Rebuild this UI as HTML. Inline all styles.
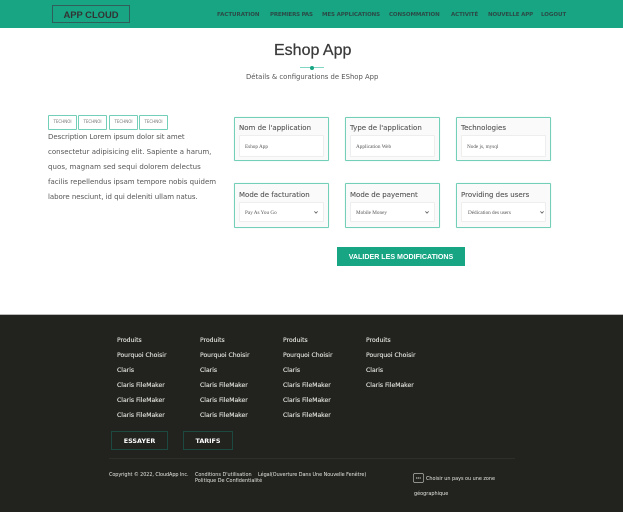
<!DOCTYPE html>
<html lang="fr">
<head>
<meta charset="utf-8">
<title>Eshop App</title>
<style>
html,body{margin:0;padding:0;background:#fff}
#p{position:relative;width:623px;height:512px;overflow:hidden;background:#fff;font-family:"DejaVu Sans","Liberation Sans",sans-serif;filter:blur(.35px)}
#p div,#p span.t{position:absolute;box-sizing:border-box}
.t{white-space:nowrap;line-height:10px;height:10px;display:block;transform:translateY(1px)}
.nav{top:8.5px;font-size:5.5px;font-weight:bold;color:#2c4a45;letter-spacing:-.03px}
.tag{top:115px;height:14.5px;width:29px;border:1px solid #74cfb8;font-size:4px;color:#777;text-align:center;line-height:12.5px;border-radius:1px}
.d{left:48px;font-size:7px;color:#555}
.card{width:95px;border:1px solid #74cfb8;background:#fafafa;border-radius:1px;box-shadow:0 0 1px #bfe8dc}
.lab{font-size:7px;color:#555;-webkit-text-stroke:.1px #555}
.inp{background:#fff;border:1px solid #eee;border-radius:1px;width:85px}
.val{font-family:"Liberation Serif",serif;font-size:5.2px;color:#555}
.f{font-size:6.1px;color:#ecece6;-webkit-text-stroke:.1px #ecece6}
.fb{border:1px solid #1d4a40;color:#fff;font-weight:bold;font-size:6.4px;text-align:center;line-height:18px;height:19px}
.s{font-size:4.9px;color:#e6e6e0}
</style>
</head>
<body>
<div id="p">
  <div style="left:0;top:0;width:623px;height:28px;background:#17a584"></div>
  <div style="left:52px;top:5px;width:78px;height:18px;border:1px solid #2f5f58;color:#333;font-weight:bold;font-family:'Liberation Sans',sans-serif;font-size:9.4px;text-align:center;line-height:18px">APP CLOUD</div>
  <span class="t nav" style="left:217px">FACTURATION</span>
  <span class="t nav" style="left:270px;letter-spacing:-.2px">PREMIERS PAS</span>
  <span class="t nav" style="left:322px;letter-spacing:-.12px">MES APPLICATIONS</span>
  <span class="t nav" style="left:389px;letter-spacing:-.1px">CONSOMMATION</span>
  <span class="t nav" style="left:451px;letter-spacing:-.1px">ACTIVITÉ</span>
  <span class="t nav" style="left:488px;letter-spacing:-.15px">NOUVELLE APP</span>
  <span class="t nav" style="left:541px">LOGOUT</span>

  <span class="t" style="left:274px;top:45px;font-size:16px;color:#3a3a3a;font-family:'Liberation Sans',sans-serif;-webkit-text-stroke:.25px #3a3a3a">Eshop App</span>
  <div style="left:300px;top:67px;width:24px;height:1px;background:#7fd6c2"></div>
  <div style="left:309.5px;top:65.5px;width:4px;height:4px;border-radius:50%;background:#17a584"></div>
  <span class="t" style="left:246px;top:70.5px;font-size:6.85px;color:#555">Détails &amp; configurations de EShop App</span>

  <div class="tag" style="left:48px">TECHNOI</div>
  <div class="tag" style="left:78px">TECHNOI</div>
  <div class="tag" style="left:109px">TECHNOI</div>
  <div class="tag" style="left:139px">TECHNOI</div>

  <span class="t d" style="top:130.5px;letter-spacing:-.05px">Description Lorem ipsum dolor sit amet</span>
  <span class="t d" style="top:146px">consectetur adipisicing elit. Sapiente a harum,</span>
  <span class="t d" style="top:161px;letter-spacing:.05px">quos, magnam sed sequi dolorem delectus</span>
  <span class="t d" style="top:175.5px">facilis repellendus ipsam tempore nobis quidem</span>
  <span class="t d" style="top:191px;letter-spacing:-.05px">labore nesciunt, id qui deleniti ullam natus.</span>

  <div class="card" style="left:234px;top:117px;height:44px"></div>
  <span class="t lab" style="left:239px;top:122px">Nom de l'application</span>
  <div class="inp" style="left:239px;top:135px;height:22px"></div>
  <span class="t val" style="left:245px;top:140.5px">Eshop App</span>

  <div class="card" style="left:345px;top:117px;height:44px"></div>
  <span class="t lab" style="left:350px;top:122px">Type de l'application</span>
  <div class="inp" style="left:350px;top:135px;height:22px"></div>
  <span class="t val" style="left:356px;top:140.5px">Application Web</span>

  <div class="card" style="left:456px;top:117px;height:44px"></div>
  <span class="t lab" style="left:461px;top:122px">Technologies</span>
  <div class="inp" style="left:461px;top:135px;height:22px"></div>
  <span class="t val" style="left:467px;top:140.5px">Node js, mysql</span>

  <div class="card" style="left:234px;top:183px;height:45px"></div>
  <span class="t lab" style="left:239px;top:188.5px">Mode de facturation</span>
  <div class="inp" style="left:239px;top:202px;height:20px"></div>
  <span class="t val" style="left:245px;top:206.5px">Pay As You Go</span>
  <svg style="position:absolute;left:313px;top:210px" width="6" height="5" viewBox="0 0 6 5"><path d="M1.4 1.4 3 3.2 4.6 1.4" fill="none" stroke="#555" stroke-width=".8"/></svg>

  <div class="card" style="left:345px;top:183px;height:45px"></div>
  <span class="t lab" style="left:350px;top:188.5px">Mode de payement</span>
  <div class="inp" style="left:350px;top:202px;height:20px"></div>
  <span class="t val" style="left:356px;top:206.5px">Mobile Money</span>
  <svg style="position:absolute;left:424px;top:210px" width="6" height="5" viewBox="0 0 6 5"><path d="M1.4 1.4 3 3.2 4.6 1.4" fill="none" stroke="#555" stroke-width=".8"/></svg>

  <div class="card" style="left:456px;top:183px;height:45px"></div>
  <span class="t lab" style="left:461px;top:188.5px">Providing des users</span>
  <div class="inp" style="left:461px;top:202px;height:20px"></div>
  <span class="t val" style="left:468px;top:206.5px">Dédication des users</span>
  <svg style="position:absolute;left:539px;top:210px" width="6" height="5" viewBox="0 0 6 5"><path d="M1.4 1.4 3 3.2 4.6 1.4" fill="none" stroke="#555" stroke-width=".8"/></svg>

  <div style="left:337px;top:247px;width:128px;height:19px;background:#17a584;color:#fff;font-weight:bold;font-family:'Liberation Sans',sans-serif;font-size:7.1px;text-align:center;line-height:20px">VALIDER LES MODIFICATIONS</div>

  <div style="left:0;top:314px;width:623px;height:198px;background:#22221f;border-top:1px solid #bbb"></div>

  <span class="t f" style="left:117px;top:334.5px">Produits</span>
  <span class="t f" style="left:117px;top:349.5px">Pourquoi Choisir</span>
  <span class="t f" style="left:117px;top:364.5px">Claris</span>
  <span class="t f" style="left:117px;top:380px">Claris FileMaker</span>
  <span class="t f" style="left:117px;top:395px">Claris FileMaker</span>
  <span class="t f" style="left:117px;top:410px">Claris FileMaker</span>

  <span class="t f" style="left:200px;top:334.5px">Produits</span>
  <span class="t f" style="left:200px;top:349.5px">Pourquoi Choisir</span>
  <span class="t f" style="left:200px;top:364.5px">Claris</span>
  <span class="t f" style="left:200px;top:380px">Claris FileMaker</span>
  <span class="t f" style="left:200px;top:395px">Claris FileMaker</span>
  <span class="t f" style="left:200px;top:410px">Claris FileMaker</span>

  <span class="t f" style="left:283px;top:334.5px">Produits</span>
  <span class="t f" style="left:283px;top:349.5px">Pourquoi Choisir</span>
  <span class="t f" style="left:283px;top:364.5px">Claris</span>
  <span class="t f" style="left:283px;top:380px">Claris FileMaker</span>
  <span class="t f" style="left:283px;top:395px">Claris FileMaker</span>
  <span class="t f" style="left:283px;top:410px">Claris FileMaker</span>

  <span class="t f" style="left:366px;top:334.5px">Produits</span>
  <span class="t f" style="left:366px;top:349.5px">Pourquoi Choisir</span>
  <span class="t f" style="left:366px;top:364.5px">Claris</span>
  <span class="t f" style="left:366px;top:380px">Claris FileMaker</span>

  <div class="fb" style="left:111px;top:431px;width:57px">ESSAYER</div>
  <div class="fb" style="left:183px;top:431px;width:50px">TARIFS</div>
  <div style="left:109px;top:458px;width:406px;height:1px;background:#2e2e2a"></div>

  <span class="t s" style="left:109px;top:468.5px;letter-spacing:-.06px">Copyright © 2022, CloudApp Inc.</span>
  <span class="t s" style="left:195px;top:468.5px">Conditions D'utilisation</span>
  <span class="t s" style="left:258px;top:468.5px;letter-spacing:-.04px">Légal(Ouverture Dans Une Nouvelle Fenêtre)</span>
  <span class="t s" style="left:195px;top:475px;letter-spacing:.02px">Politique De Confidentialité</span>

  <svg style="position:absolute;left:413px;top:473px" width="11" height="10" viewBox="0 0 11 10"><rect x=".5" y=".5" width="10" height="9" rx="1.5" fill="none" stroke="#b5b5b0" stroke-width=".7"/><path d="M3 5h5" stroke="#b5b5b0" stroke-width="1.2" stroke-dasharray="1.2 .6"/></svg>
  <span class="t s" style="left:426px;top:472.5px;letter-spacing:-.01px">Choisir un pays ou une zone</span>
  <span class="t s" style="left:414px;top:487.5px;letter-spacing:.02px">géographique</span>
</div>
</body>
</html>
